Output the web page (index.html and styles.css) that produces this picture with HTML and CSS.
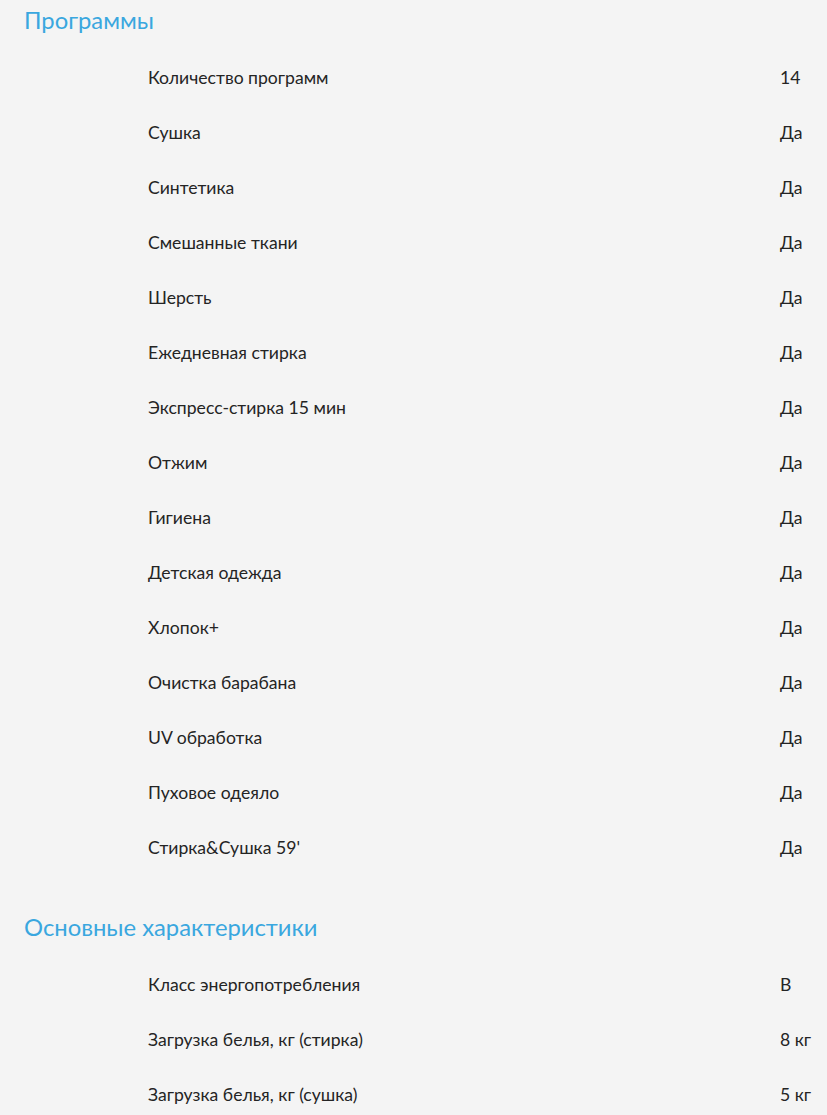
FILE: index.html
```html
<!DOCTYPE html>
<html lang="ru">
<head>
<meta charset="utf-8">
<link rel="stylesheet" href="styles.css">
</head>
<body>
<section class="group">
  <h2 class="group-title">Программы</h2>
  <ul class="specs">
    <li class="spec"><span class="name">Количество программ</span><span class="value">14</span></li>
    <li class="spec"><span class="name">Сушка</span><span class="value">Да</span></li>
    <li class="spec"><span class="name">Синтетика</span><span class="value">Да</span></li>
    <li class="spec"><span class="name">Смешанные ткани</span><span class="value">Да</span></li>
    <li class="spec"><span class="name">Шерсть</span><span class="value">Да</span></li>
    <li class="spec"><span class="name">Ежедневная стирка</span><span class="value">Да</span></li>
    <li class="spec"><span class="name">Экспресс-стирка 15 мин</span><span class="value">Да</span></li>
    <li class="spec"><span class="name">Отжим</span><span class="value">Да</span></li>
    <li class="spec"><span class="name">Гигиена</span><span class="value">Да</span></li>
    <li class="spec"><span class="name">Детская одежда</span><span class="value">Да</span></li>
    <li class="spec"><span class="name">Хлопок+</span><span class="value">Да</span></li>
    <li class="spec"><span class="name">Очистка барабана</span><span class="value">Да</span></li>
    <li class="spec"><span class="name">UV обработка</span><span class="value">Да</span></li>
    <li class="spec"><span class="name">Пуховое одеяло</span><span class="value">Да</span></li>
    <li class="spec"><span class="name">Стирка&amp;Сушка 59'</span><span class="value">Да</span></li>
  </ul>
</section>
<section class="group">
  <h2 class="group-title">Основные характеристики</h2>
  <ul class="specs">
    <li class="spec"><span class="name">Класс энергопотребления</span><span class="value">B</span></li>
    <li class="spec"><span class="name">Загрузка белья, кг (стирка)</span><span class="value">8 кг</span></li>
    <li class="spec"><span class="name">Загрузка белья, кг (сушка)</span><span class="value">5 кг</span></li>
  </ul>
</section>
</body>
</html>
```
FILE: styles.css
```css
html, body {
  margin: 0;
  padding: 0;
  background: #f4f4f4;
}
body {
  font-family: "Lato", "Noto Sans", sans-serif;
  color: #242424;
}
.group + .group {
  margin-top: 32px;
}
.group-title {
  margin: 0;
  padding-left: 24px;
  height: 40px;
  line-height: 40px;
  font-size: 23.8px;
  font-weight: 400;
  color: #3aa7df;
}
.specs {
  list-style: none;
  margin: 10px 0 0;
  padding: 0;
}
.spec {
  display: grid;
  grid-template-columns: 148px 632px 1fr;
  height: 55px;
  line-height: 56px;
  font-size: 17.6px;
}
.name {
  grid-column: 2;
}
.value {
  grid-column: 3;
}
```
